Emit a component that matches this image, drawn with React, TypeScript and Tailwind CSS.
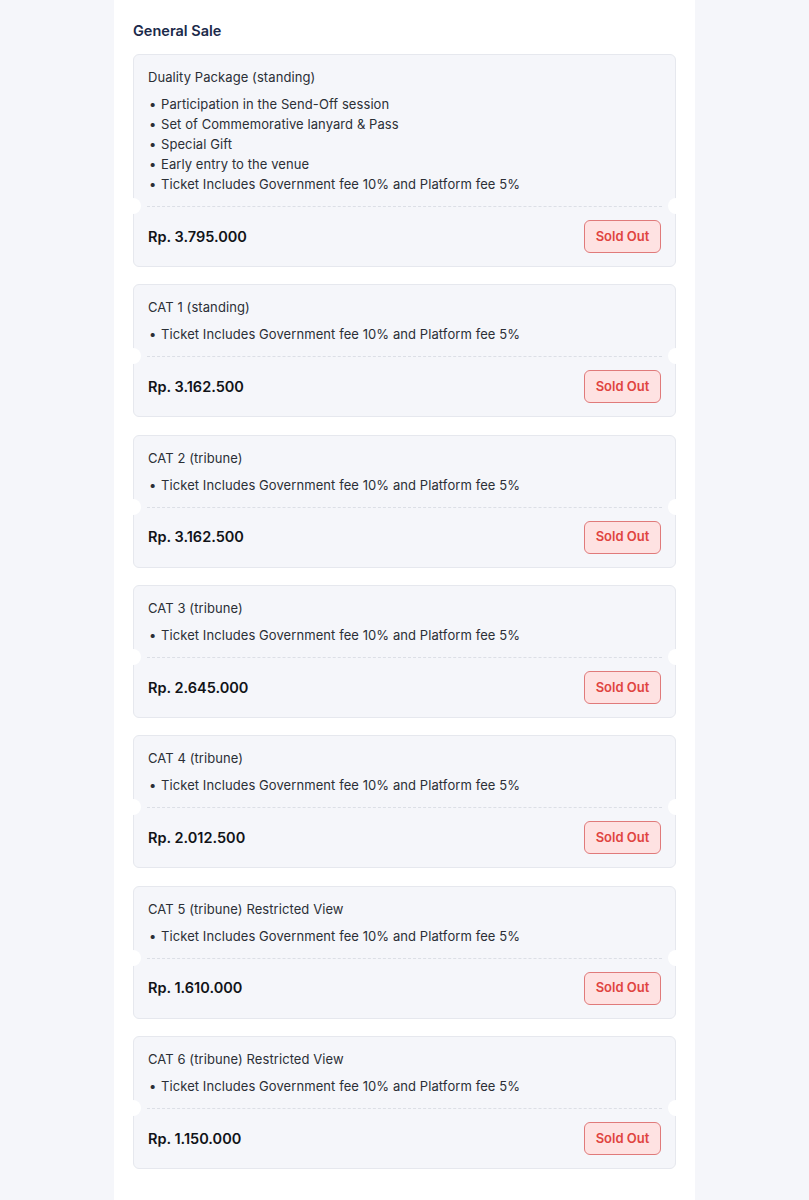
import React from 'react'

type Ticket = {
  name: string
  perks: string[]
  price: string
}

const FEE = 'Ticket Includes Government fee 10% and Platform fee 5%'

const tickets: Ticket[] = [
  {
    name: 'Duality Package (standing)',
    perks: [
      'Participation in the Send-Off session',
      'Set of Commemorative lanyard & Pass',
      'Special Gift',
      'Early entry to the venue',
      FEE,
    ],
    price: 'Rp. 3.795.000',
  },
  { name: 'CAT 1 (standing)', perks: [FEE], price: 'Rp. 3.162.500' },
  { name: 'CAT 2 (tribune)', perks: [FEE], price: 'Rp. 3.162.500' },
  { name: 'CAT 3 (tribune)', perks: [FEE], price: 'Rp. 2.645.000' },
  { name: 'CAT 4 (tribune)', perks: [FEE], price: 'Rp. 2.012.500' },
  { name: 'CAT 5 (tribune) Restricted View', perks: [FEE], price: 'Rp. 1.610.000' },
  { name: 'CAT 6 (tribune) Restricted View', perks: [FEE], price: 'Rp. 1.150.000' },
]

function TicketCard({ ticket }: { ticket: Ticket }) {
  return (
    <div className="relative rounded-md border border-[#e6e8ee] bg-[#f5f6fa]">
      {/* Top: name + perks */}
      <div className="px-[14px] pt-[12px] pb-[12px]">
        <p className="text-[13px] leading-5 tracking-[0.08px] text-[#2b2f36]">{ticket.name}</p>
        <ul className="mt-[7px]">
          {ticket.perks.map((perk) => (
            <li key={perk} className="flex text-[13px] leading-5 tracking-[0.08px] text-[#2b2f36]">
              <span className="w-[13px] shrink-0 pl-[1px]">•</span>
              <span>{perk}</span>
            </li>
          ))}
        </ul>
      </div>

      {/* Tear line with notches */}
      <div className="relative">
        <div className="mx-[13px] border-t border-dashed border-[#dcdfe6]" />
        <span className="absolute -left-[9px] -top-[8px] h-4 w-4 rounded-full bg-white" />
        <span className="absolute -right-[9px] -top-[8px] h-4 w-4 rounded-full bg-white" />
      </div>

      {/* Bottom: price + status */}
      <div className="flex items-center justify-between px-[14px] pt-[13px] pb-[13px]">
        <span className="text-[14.5px] font-semibold text-[#111318]">{ticket.price}</span>
        <button className="h-[33px] w-[77px] rounded-md border border-[#e07a7a] bg-[#fee2e2] text-[13px] font-semibold text-[#e0443f]">
          Sold Out
        </button>
      </div>
    </div>
  )
}

export default function App() {
  return (
    <div
      className="min-h-screen bg-[#f5f6fa]"
      style={{ fontFamily: 'Inter, "Noto Sans", sans-serif' }}
    >
      <div className="mx-auto min-h-[1200px] w-[581px] bg-white px-[19px] pt-[21px] pb-8">
        <h2 className="mb-[13px] text-[14.5px] font-semibold leading-5 text-[#1b2a4a]">General Sale</h2>
        <div className="flex flex-col gap-[17.33px]">
          {tickets.map((t) => (
            <TicketCard key={t.name} ticket={t} />
          ))}
        </div>
      </div>
    </div>
  )
}
